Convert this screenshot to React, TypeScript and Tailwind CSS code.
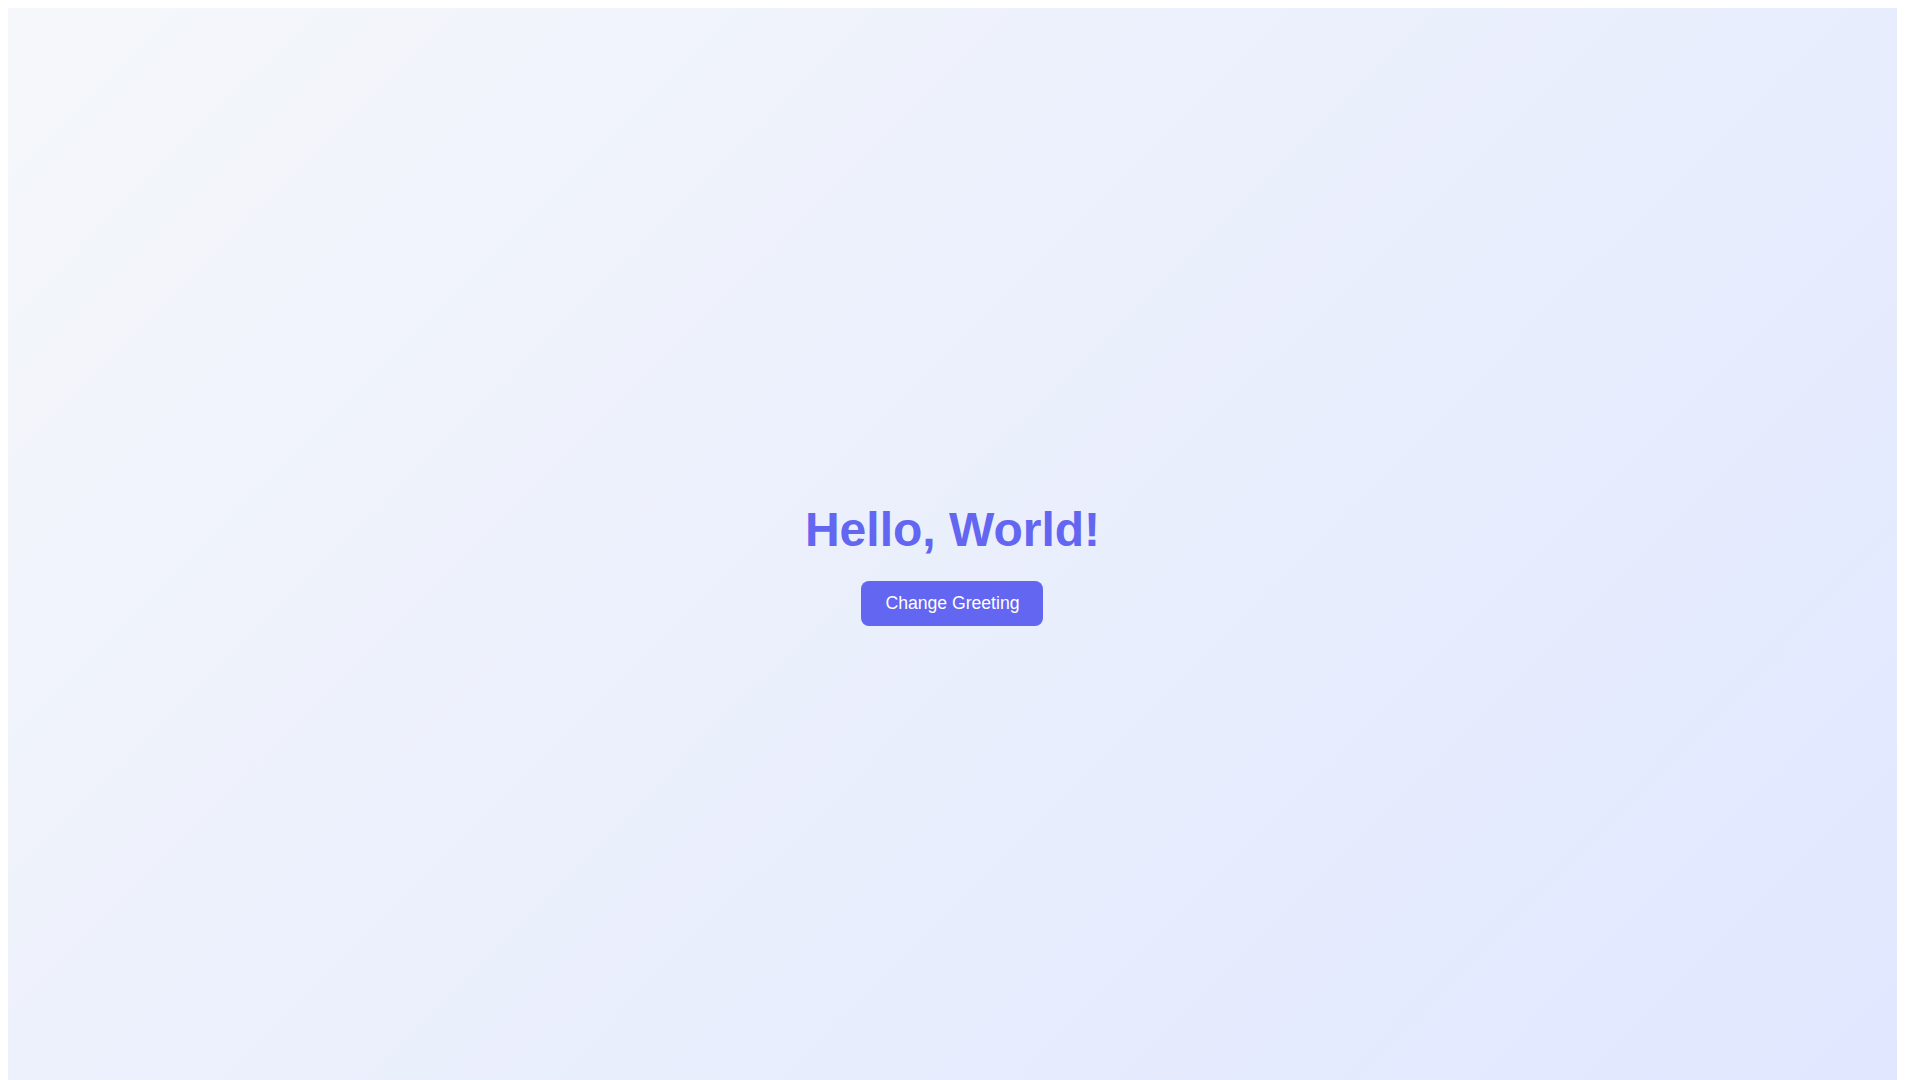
import { useState } from 'react';

const greetings = ['Hello, World!', 'Bonjour, le Monde!', 'Hola, Mundo!', 'Hallo, Welt!'];

export default function App() {
    const [index, setIndex] = useState(0);
    return (
        <div className="h-screen overflow-y-scroll">
            <div className="m-2 mr-[23px] min-h-screen flex flex-col items-center justify-center bg-[linear-gradient(135deg,#f5f7fa_0%,#e0e7ff_100%)] font-['Liberation_Sans',Arial,sans-serif]">
                <div className="text-center">
                    <h1 className="mt-8 mb-6 text-5xl leading-[normal] font-bold text-[#6366f1]">
                        {greetings[index]}
                    </h1>
                    <button
                        onClick={() => setIndex((index + 1) % greetings.length)}
                        className="px-6 py-3 text-[1.1rem] leading-[normal] rounded-lg bg-[#6366f1] text-white cursor-pointer hover:bg-[#4f46e5] transition-colors"
                    >
                        Change Greeting
                    </button>
                </div>
            </div>
        </div>
    );
}
